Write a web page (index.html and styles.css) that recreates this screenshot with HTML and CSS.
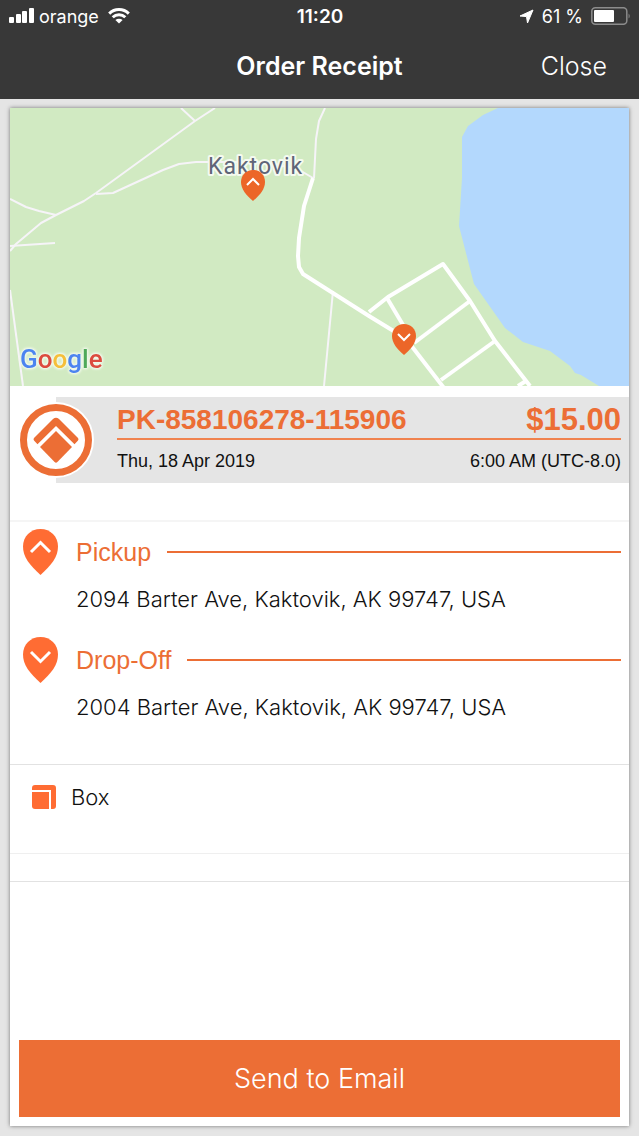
FILE: index.html
```html
<!DOCTYPE html>
<html lang="en">
<head>
  <meta charset="UTF-8" />
  <meta name="viewport" content="width=device-width, initial-scale=1" />
  <title>Order Receipt</title>
  <link rel="stylesheet" href="styles.css">
</head>
<body>
  <header class="header">
    <div class="status-bar">
      <div class="status-left">
        <svg class="signal" width="25" height="16" viewBox="0 0 25 16" aria-hidden="true">
          <rect x="0" y="9" width="5" height="6" rx="1" />
          <rect x="7" y="6" width="5" height="9" rx="1" />
          <rect x="13" y="3" width="5" height="12" rx="1" />
          <rect x="20" y="0" width="5" height="15" rx="1" />
        </svg>
        <span>orange</span>
        <svg class="wifi" width="22" height="16" viewBox="0 0 22 16" aria-hidden="true">
          <path d="M1.2 5.6a14 14 0 0 1 19.6 0" />
          <path d="M4.7 9.2a9 9 0 0 1 12.6 0" />
          <path class="solid" d="M11 15.6l-3.6-3.5a5.2 5.2 0 0 1 7.2 0z" />
        </svg>
      </div>
      <div class="status-time">11:20</div>
      <div class="status-right">
        <svg class="location" width="15" height="15" viewBox="0 0 15 15" aria-hidden="true">
          <path d="M14 1L8.500 14 7.500 7.600 1 7z" />
        </svg>
        <span>61 %</span>
        <svg class="battery" width="40" height="18" viewBox="0 0 40 18" aria-hidden="true">
          <rect class="battery-shell" x=".8" y=".8" width="35" height="16.4" rx="3.5" />
          <rect x="3" y="3" width="20" height="12" rx="1" />
          <path class="battery-tip" d="M37.6 6.4q2.2 2.6 0 5.2z" />
        </svg>
      </div>
    </div>
    <div class="nav-bar">
      <h1>Order Receipt</h1>
      <button class="close-btn" type="button">Close</button>
    </div>
  </header>

  <main class="page">
    <article class="card">
      <svg class="map" viewBox="0 0 619 278" role="img" aria-label="Map of Kaktovik">
        <rect class="land" width="619" height="278" />
        <path class="water" d="M488 0L473 7 458 18 452 29V70L449 118 464 176 495 220 513 234 540 243 560 258 565 265 571 267 589 278H619V0z" />
        <g class="road minor">
          <path d="M171 0l14 13" />
          <path d="M205 0L185 13 86 85 74 93 46 107 31 115 6 136 0 143" />
          <path d="M0 91l16 8 13 4 17 4" />
          <path d="M0 138l45-3" />
          <path d="M86 86l17-1 50-23 16-6 17-2h60l40 6 17 10" />
          <path d="M315 0l-6 13-3 18-2 39" />
          <path d="M0 182l13 96" />
          <path d="M323 183l-9 95" />
        </g>
        <g class="road">
          <path d="M303 70l-9 28-5 32-1 18 1 11 4 7 66 42 36 22 5 6 34 44" />
          <path d="M359 204l19-15 55-33 27 37 25 40 35 45" />
          <path d="M377 190l22 37" />
          <path d="M460 193l-56 42" />
          <path d="M485 233l-54 39" />
          <path d="M516 273l-8 5" />
        </g>
        <text class="town" x="198" y="66">Kaktovik</text>
        <g transform="translate(231 62)">
          <path class="map-pin" d="M12 0C5 0 0 5 0 12c0 7 5 13 12 19 7-6 12-12 12-19C24 5 19 0 12 0z" />
          <path class="chevron" d="M6 15l6-6 6 6" />
        </g>
        <g transform="translate(382 216)">
          <path class="map-pin" d="M12 0C5 0 0 5 0 12c0 7 5 13 12 19 7-6 12-12 12-19C24 5 19 0 12 0z" />
          <path class="chevron" d="M6 10l6 6 6-6" />
        </g>
        <text class="google" x="10" y="260"><tspan class="g-blue">G</tspan><tspan class="g-red">o</tspan><tspan class="g-yellow">o</tspan><tspan class="g-blue">g</tspan><tspan class="g-green">l</tspan><tspan class="g-red">e</tspan></text>
      </svg>

      <section class="summary">
        <svg class="badge" width="76" height="76" viewBox="0 0 76 76" aria-hidden="true">
          <circle class="badge-bg" cx="38" cy="38" r="38" />
          <circle class="badge-ring" cx="38" cy="38" r="32.500" />
          <path d="M38 29l16 16-14.600 15.100q-1.400 1.400-2.800 0L22 45z" />
          <path d="M35 17q3-2.600 6 0L60 36q1 1.200 0 2.500l-3.500 3.700L38 24 19.500 42.200 16 38.500q-1-1.300 0-2.500z" />
        </svg>
        <div class="summary-body">
          <div class="summary-top">
            <h2 class="order-id">PK-858106278-115906</h2>
            <strong class="price">$15.00</strong>
          </div>
          <div class="summary-bottom">
            <span>Thu, 18 Apr 2019</span>
            <span>6:00 AM (UTC-8.0)</span>
          </div>
        </div>
      </section>

      <section class="stops">
        <div class="stop">
          <svg class="pin" width="35" height="46" viewBox="0 0 35 46" aria-hidden="true">
            <path class="drop" d="M17.500 0C7.500 0 0 7.500 0 17.500 0 28 6.500 36 17.500 46 28.500 36 35 28 35 17.500 35 7.500 27.500 0 17.500 0z" />
            <path class="chevron" d="M8 23l9.500-9.500L27 23" />
          </svg>
          <div class="stop-body">
            <h3>Pickup</h3>
            <p>2094 Barter Ave, Kaktovik, AK 99747, USA</p>
          </div>
        </div>
        <div class="stop">
          <svg class="pin" width="35" height="46" viewBox="0 0 35 46" aria-hidden="true">
            <path class="drop" d="M17.500 0C7.500 0 0 7.500 0 17.500 0 28 6.500 36 17.500 46 28.500 36 35 28 35 17.500 35 7.500 27.500 0 17.500 0z" />
            <path class="chevron" d="M8 15l9.500 9.500L27 15" />
          </svg>
          <div class="stop-body">
            <h3>Drop-Off</h3>
            <p>2004 Barter Ave, Kaktovik, AK 99747, USA</p>
          </div>
        </div>
      </section>

      <section class="item">
        <svg width="24" height="24" viewBox="0 0 24 24" aria-hidden="true">
          <path d="M0 5V3q0-3 3-3h18q3 0 3 3v18q0 3-3 3h-2V5z" />
          <path d="M0 7h17v17H3q-3 0-3-3z" />
        </svg>
        <span>Box</span>
      </section>

      <div class="spacer"></div>

      <button class="send-btn" type="button">Send to Email</button>
    </article>
  </main>
</body>
</html>
```
FILE: styles.css
```css
* {
  box-sizing: border-box;
}
body {
  margin: 0;
  min-height: 100vh;
  display: flex;
  flex-direction: column;
  background: #e5e5e5;
  color: #111;
  font-family: "Liberation Sans", Arial, sans-serif;
}
h1, h2, h3, p {
  margin: 0;
}
button {
  border: none;
  cursor: pointer;
  font-family: Inter, sans-serif;
  font-weight: 300;
}

/* header */
.header {
  background: #383838;
  color: #fff;
}
.status-bar {
  display: grid;
  grid-template-columns: 1fr auto 1fr;
  align-items: center;
  height: 32px;
  padding: 0 8px 0 9px;
  font-family: Inter, sans-serif;
  font-size: 18px;
}
.status-bar svg {
  fill: #fff;
}
.status-left,
.status-right {
  display: flex;
  align-items: center;
  gap: 5px;
}
.status-right {
  justify-content: flex-end;
  gap: 8px;
}
.status-bar .wifi {
  margin-left: 4px;
  fill: none;
  stroke: #fff;
  stroke-width: 3;
}
.wifi .solid {
  fill: #fff;
  stroke: none;
}
.location {
  stroke: #fff;
  stroke-width: 1;
  stroke-linejoin: round;
}
.status-time {
  font-size: 19px;
  font-weight: 600;
}
.battery .battery-shell {
  fill: none;
  stroke: #8c8c8c;
  stroke-width: 1.5;
}
.battery .battery-tip {
  fill: #8c8c8c;
}
.nav-bar {
  display: grid;
  grid-template-columns: 1fr auto 1fr;
  align-items: center;
  height: 67px;
  padding: 0 32px;
}
.nav-bar h1 {
  grid-column: 2;
  font-family: Inter, sans-serif;
  font-size: 25px;
  font-weight: 600;
}
.close-btn {
  justify-self: end;
  padding: 0;
  background: none;
  color: #fff;
  font-size: 25px;
}

/* card */
.page {
  flex: 1;
  display: flex;
  padding: 9px 10px 10px;
}
.card {
  flex: 1;
  display: flex;
  flex-direction: column;
  min-width: 0;
  background: #fff;
  box-shadow: 0 0 4px rgba(0, 0, 0, 0.5);
}

/* map */
.map {
  display: block;
  width: 100%;
}
.land {
  fill: #d1eac2;
}
.water {
  fill: #b3d8fd;
}
.road {
  fill: none;
  stroke: #fff;
  stroke-width: 4;
  stroke-linejoin: round;
}
.road.minor {
  stroke: #f6f4f8;
  stroke-width: 2;
}
.town {
  fill: #5f6578;
  stroke: #f4faf0;
  stroke-width: 4;
  stroke-linejoin: round;
  paint-order: stroke;
  font-family: Roboto, sans-serif;
  font-size: 23px;
  letter-spacing: 1px;
}
/* halo goes behind the whole word, so the letters don't cover each other */
.google {
  filter: drop-shadow(0 0 1px #f0f8ea) drop-shadow(0 0 1px #f0f8ea) drop-shadow(0 0 1px #f0f8ea);
  font-family: Roboto, sans-serif;
  font-size: 26px;
  font-weight: 500;
}
.g-blue { fill: #4c84f0; }
.g-red { fill: #dc4b3e; }
.g-yellow { fill: #f5bf3a; }
.g-green { fill: #4fa95a; }
.map-pin {
  fill: #ec6628;
}
.chevron {
  fill: none;
  stroke: #fff;
  stroke-width: 2;
}

/* order summary */
.summary {
  display: flex;
  align-items: center;
  height: 86px;
  margin: 11px 0 37px;
  background: linear-gradient(to right, #fff 46px, #e5e5e5 46px);
}
.badge {
  flex: none;
  margin-left: 8px;
  fill: #ec6e35;
}
.badge-bg {
  fill: #fff;
}
.badge-ring {
  fill: none;
  stroke: #ec6e35;
  stroke-width: 7;
}
.summary-body {
  flex: 1;
  margin: 0 8px 0 23px;
}
.summary-top,
.summary-bottom {
  display: flex;
  justify-content: space-between;
  align-items: center;
}
.summary-top {
  height: 43px;
  padding-top: 5px;
  border-bottom: 2px solid #f0824e;
  color: #ec6e35;
}
.order-id {
  font-size: 28px;
}
.price {
  font-size: 31px;
}
.summary-bottom {
  height: 43px;
  font-size: 18px;
}

/* pickup and drop-off */
.stops {
  padding: 7px 8px 19px 13px;
  border-top: 2px solid #f5f5f5;
}
.stop {
  display: flex;
  gap: 18px;
  height: 108px;
}
.pin {
  flex: none;
}
.pin .drop {
  fill: #ff6c33;
}
.pin .chevron {
  stroke-width: 3;
}
.stop-body {
  flex: 1;
}
.stop h3 {
  display: flex;
  align-items: center;
  gap: 16px;
  height: 46px;
  color: #ec6e35;
  font-size: 25px;
  font-weight: 400;
}
.stop h3::after {
  content: "";
  flex: 1;
  height: 2px;
  background: #ec6e35;
}
.stop p,
.item {
  font-family: Inter, sans-serif;
  font-size: 22px;
  font-weight: 300;
}
.stop p {
  line-height: 48px;
}

/* package */
.item {
  display: flex;
  align-items: flex-start;
  gap: 15px;
  height: 90px;
  padding: 20px 22px;
  border-top: 1px solid #e2e2e2;
  border-bottom: 1px solid #efefef;
  line-height: 24px;
}
.item svg {
  fill: #ff6c33;
}
.spacer {
  height: 28px;
  border-bottom: 1px solid #e2e2e2;
}

.send-btn {
  margin: auto 9px 9px;
  padding: 22px;
  background: #ec6e35;
  color: #fff;
  font-size: 27px;
  line-height: 33px;
}
```
